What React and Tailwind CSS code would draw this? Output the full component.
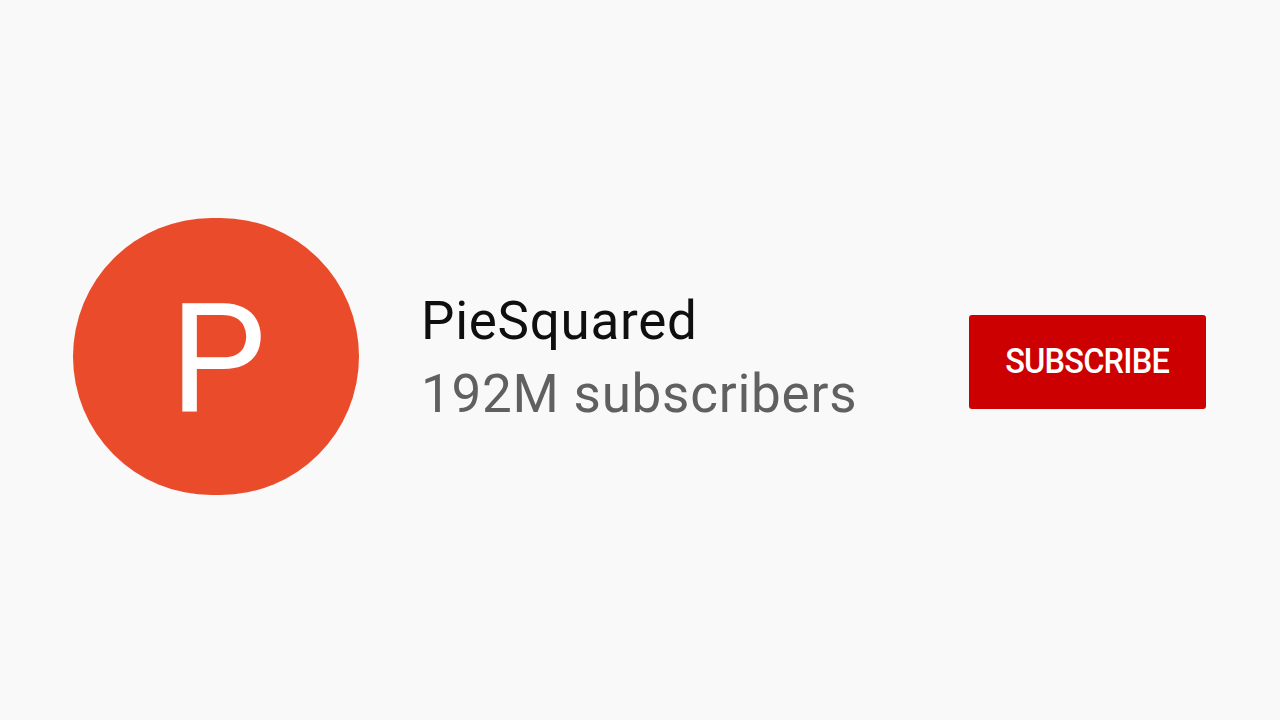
export default function App() {
  return (
    <div className="w-[1280px] h-[720px] bg-[#f9f9f9] flex items-center font-['Roboto',sans-serif]">
      {/* Avatar */}
      <div className="ml-[73px] mt-[-8px] w-[286px] h-[277px] rounded-full bg-[#ea4b2a] flex items-center justify-center">
        <span className="text-white text-[153px] leading-none font-normal mt-[4px] ml-[4px]">P</span>
      </div>

      {/* Channel info */}
      <div className="ml-[62px] mt-[-5px] flex flex-col">
        <div className="text-[53px] leading-[60px] tracking-[0.7px] text-[#0f0f0f]">PieSquared</div>
        <div className="mt-[13px] text-[53px] leading-[60px] tracking-[0.75px] text-[#606060]">
          192M subscribers
        </div>
      </div>

      {/* Subscribe */}
      <button className="ml-auto mr-[74px] mt-[4px] w-[237px] h-[94px] rounded-[3px] bg-[#cc0000] text-white flex items-center justify-center">
        <span className="inline-block text-[35px] font-medium tracking-tight scale-x-[0.93]">SUBSCRIBE</span>
      </button>
    </div>
  );
}
